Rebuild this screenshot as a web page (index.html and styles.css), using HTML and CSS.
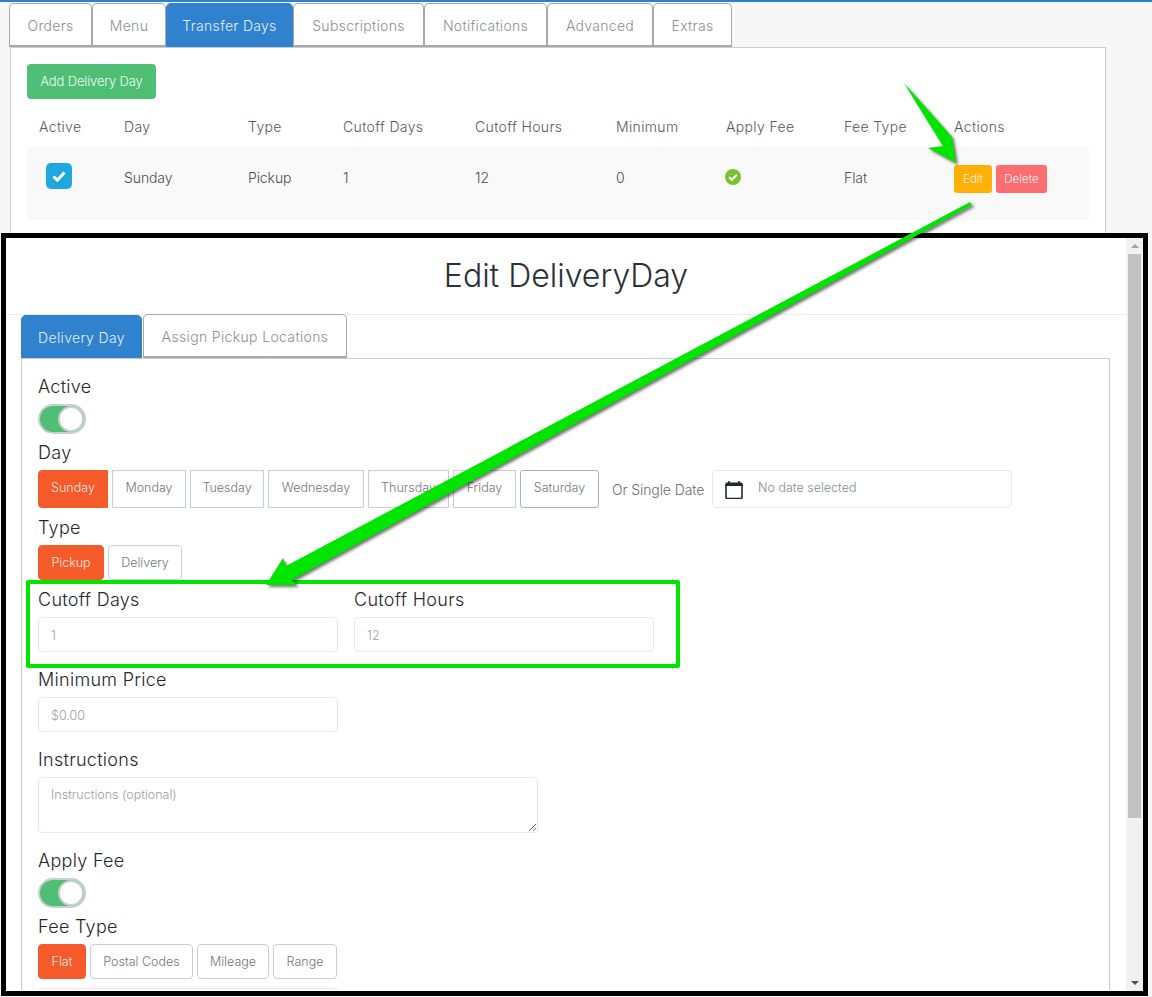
FILE: index.html
```html
<!DOCTYPE html>
<html lang="en">
<head>
<meta charset="utf-8">
<title>Transfer Days</title>
<link rel="stylesheet" href="styles.css">
</head>
<body>
<main class="page">
  <nav class="tabs page-tabs">
    <a class="tab">Orders</a><a class="tab">Menu</a><a class="tab active">Transfer Days</a><a class="tab">Subscriptions</a><a class="tab">Notifications</a><a class="tab">Advanced</a><a class="tab">Extras</a>
  </nav>
  <section class="panel">
    <button class="add-btn">Add Delivery Day</button>
    <div class="grid-row head-row">
      <span>Active</span><span>Day</span><span>Type</span><span>Cutoff Days</span><span>Cutoff Hours</span><span>Minimum</span><span>Apply Fee</span><span>Fee Type</span><span>Actions</span>
    </div>
    <div class="grid-row data-row">
      <span class="check-cell"><svg class="checkbox" viewBox="0 0 26 26"><rect width="26" height="26" rx="5" fill="#1fa8dd"/><path d="M7.5 13.5l3.8 3.6 7.2-7.6" fill="none" stroke="#fff" stroke-width="3"/></svg></span>
      <span>Sunday</span><span>Pickup</span><span>1</span><span>12</span><span>0</span>
      <span><svg class="ok" viewBox="0 0 16 16"><circle cx="8" cy="8" r="8" fill="#79c131"/><path d="M4.2 8.3l2.6 2.5 5-5.1" fill="none" stroke="#fff" stroke-width="2"/></svg></span>
      <span>Flat</span>
      <span class="actions"><button class="mini edit">Edit</button><button class="mini delete">Delete</button></span>
    </div>
  </section>
</main>

<section class="modal">
  <div class="modal-body">
    <header class="modal-head"><h1>Edit DeliveryDay</h1></header>
    <nav class="tabs modal-tabs">
      <a class="tab active">Delivery Day</a><a class="tab">Assign Pickup Locations</a>
    </nav>
    <div class="form-panel">
      <label class="lbl">Active</label>
      <div class="toggle"><i></i></div>
      <label class="lbl after-toggle">Day</label>
      <div class="day-line">
        <div class="seg days">
          <button class="opt on">Sunday</button><button class="opt">Monday</button><button class="opt">Tuesday</button><button class="opt">Wednesday</button><button class="opt">Thursday</button><button class="opt">Friday</button><button class="opt dark">Saturday</button>
        </div>
        <span class="or">Or Single Date</span>
        <div class="date-box">
          <svg class="cal" viewBox="0 0 18 18"><path d="M1 4h16v12.5a1 1 0 0 1-1 1H2a1 1 0 0 1-1-1z" fill="#fff" stroke="#23282d" stroke-width="1.6"/><path d="M.5 2.5a1 1 0 0 1 1-1h15a1 1 0 0 1 1 1V5H.5z" fill="#23282d"/><path d="M4 0v2M14 0v2" stroke="#23282d" stroke-width="1.6"/></svg>
          <span>No date selected</span>
        </div>
      </div>
      <label class="lbl after-seg">Type</label>
      <div class="seg types"><button class="opt on">Pickup</button><button class="opt">Delivery</button></div>
      <div class="two-col after-seg">
        <div><label class="lbl">Cutoff Days</label><input class="inp" value="1"></div>
        <div><label class="lbl">Cutoff Hours</label><input class="inp" value="12"></div>
      </div>
      <label class="lbl after-input">Minimum Price</label>
      <input class="inp" placeholder="$0.00">
      <label class="lbl after-input">Instructions</label>
      <textarea class="inp area" placeholder="Instructions (optional)"></textarea>
      <label class="lbl after-input">Apply Fee</label>
      <div class="toggle"><i></i></div>
      <label class="lbl after-toggle">Fee Type</label>
      <div class="seg fees"><button class="opt on">Flat</button><button class="opt">Postal Codes</button><button class="opt">Mileage</button><button class="opt">Range</button></div>
      <input class="inp last">
    </div>
  </div>
  <div class="scrollbar">
    <span class="arrow-up"></span>
    <div class="track"><div class="thumb"></div></div>
    <span class="arrow-down"></span>
  </div>
</section>

<div class="highlight"></div>
<svg class="arrows" viewBox="0 0 1152 997">
  <g class="arrow-shape">
    <polygon points="904,83 952,137 956,163 928,148 943,146"/>
    <polygon points="970,202 972,205 292,580 297,585 266,585 283,558 286,566"/>
  </g>
</svg>
</body>
</html>
```
FILE: styles.css
```css
* { box-sizing: border-box; }
html, body { margin: 0; height: 100%; }
body {
  width: 1152px;
  height: 997px;
  overflow: hidden;
  position: relative;
  background: #f7f7f7;
  border-top: 2px solid #2f80d0;
  font-family: Inter, "Liberation Sans", sans-serif;
  font-weight: 300;
  color: #454b52;
}
button, input, textarea { font: inherit; }

.page { padding: 1px 0 0 9px; }

.tabs { display: grid; }
.page-tabs { grid-template-columns: 83px 74px 127px 131px 123px 106px 79px; width: max-content; height: 44px; }
.tab {
  display: flex;
  align-items: center;
  justify-content: center;
  padding-top: 2px;
  background: #fff;
  color: #8b8f93;
  font-size: 14px;
  letter-spacing: .3px;
  border: 1px solid #a6a8aa;
  border-bottom-width: 2px;
  border-radius: 5px 5px 0 0;
}
.tab.active { background: #3082ce; border-color: #3082ce; color: #e4eef8; }

.panel {
  width: 1096px;
  height: 300px;
  margin-left: 1px;
  padding: 16px 16px 0;
  background: #fff;
  border: 1px solid #c9ccd2;
}
.add-btn {
  display: block;
  width: 129px;
  height: 35px;
  padding: 0 0 2px;
  border: 0;
  border-radius: 4px;
  background: #4fbf76;
  color: #eefaf2;
  font-size: 13px;
  letter-spacing: -.15px;
}
.grid-row {
  display: grid;
  grid-template-columns: 85px 124px 95px 132px 141px 110px 118px 110px 147px;
  width: 1062px;
  font-size: 14px;
}
.grid-row > span { padding-left: 12px; }
.head-row { height: 48px; align-items: end; padding-bottom: 12px; color: #555a60; letter-spacing: .35px; }
.data-row { height: 73px; padding-top: 15px; background: #f9f9f9; color: #4a4f55; letter-spacing: -.1px; }
.data-row > span { height: 30px; display: flex; align-items: center; }
.checkbox { display: block; width: 26px; height: 26px; margin-left: 7px; margin-top: -2px; }
.ok { display: block; width: 16px; height: 16px; margin-left: -1px; }
.actions { gap: 4px; }
.mini {
  height: 28px;
  margin-top: 4px;
  padding: 0;
  border: 0;
  border-radius: 3px;
  color: #fff3d9;
  font-size: 11.5px;
}
.edit { width: 38px; background: #ffb007; }
.delete { width: 51px; background: #fb6f72; color: #ffe9e9; }

.modal {
  position: absolute;
  left: 1px;
  top: 231px;
  width: 1147px;
  height: 763px;
  display: flex;
  overflow: hidden;
  background: #fff;
  border: 5px solid #000;
}
.modal-body { flex: 1; min-width: 0; overflow: hidden; }
.modal-head {
  height: 77px;
  padding-bottom: 2px;
  display: flex;
  align-items: center;
  justify-content: center;
  border-bottom: 1px solid #e9ecef;
}
.modal-head h1 {
  margin: 0;
  font-size: 32px;
  font-weight: 300;
  color: #2b3036;
  letter-spacing: 0;
}
.modal-tabs { grid-template-columns: 121px 204px; gap: 1px; width: max-content; height: 43px; margin-left: 15px; }
.modal-tabs .tab { letter-spacing: .35px; }
.modal-tabs .tab:last-child { height: 44px; margin-top: -1px; }
.form-panel {
  width: 1089px;
  height: 700px;
  margin-left: 15px;
  padding: 16px 16px 0;
  border: 1px solid #c9ccd2;
}
.lbl {
  display: block;
  height: 22px;
  margin-bottom: 7px;
  font-size: 18px;
  line-height: 24px;
  font-weight: 300;
  letter-spacing: .3px;
  color: #23282d;
}
.toggle {
  position: relative;
  width: 48px;
  height: 30px;
  border: 2px solid #c7cfd0;
  border-radius: 15px;
  background: #4fbf76;
}
.toggle i {
  position: absolute;
  right: 0;
  top: 0;
  width: 26px;
  height: 26px;
  border: 2px solid #c7cfd0;
  border-radius: 50%;
  background: #fff;
}
.after-toggle { margin-top: 7px; }
.after-seg { margin-top: 8px; }
.after-input { margin-top: 16px; }

.seg { display: grid; gap: 4px; width: max-content; }
.days { grid-template-columns: 70px 74px 74px 96px 81px 63px 79px; height: 38px; }
.types { grid-template-columns: 66px 74px; height: 35px; }
.fees { grid-template-columns: 48px 103px 72px 64px; height: 35px; }
.opt {
  padding: 0;
  background: #fff;
  border: 1px solid #c9ced6;
  color: #72777d;
  font-size: 12.5px;
}
.days .opt { border-radius: 0; padding-bottom: 3px; }
.opt:first-child { border-radius: 4px 0 0 4px; }
.opt:last-child { border-radius: 0 4px 4px 0; }
.types .opt, .fees .opt { border-radius: 4px; }
.days .dark { border-color: #a9b0b8; border-radius: 3px; }
.opt.on { background: #f55a2a; border-color: #f55a2a; color: #ffe9e0; }

.day-line { display: flex; align-items: center; height: 38px; }
.or { margin-left: 13px; width: 100px; font-size: 14px; letter-spacing: -.1px; color: #6a6f75; white-space: nowrap; }
.date-box {
  display: flex;
  align-items: center;
  width: 300px;
  height: 38px;
  padding-left: 12px;
  border: 1px solid #e6e8ea;
  border-radius: 4px;
  font-size: 12.5px;
  color: #888c92;
}
.cal { width: 18px; height: 18px; margin-top: 2px; flex: none; }
.date-box span { margin: 0 0 3px 15px; }

.two-col { display: flex; gap: 16px; }
.inp {
  display: block;
  width: 300px;
  height: 35px;
  padding: 1px 12px 0;
  border: 1px solid #e6e8ea;
  border-radius: 4px;
  background: #fff;
  color: #9a9ea3;
  font-size: 12.5px;
  outline: 0;
}
.inp::placeholder { color: #9a9ea3; opacity: 1; }
.area { width: 500px; height: 56px; padding-top: 9px; }
.last { margin-top: 9px; }

.scrollbar {
  flex: none;
  width: 17px;
  background: #f1f1f1;
  display: flex;
  flex-direction: column;
  align-items: center;
}
.arrow-up, .arrow-down { flex: none; width: 0; height: 0; margin: 6px 0; border: solid transparent; border-width: 0 4px; }
.arrow-up { border-bottom: 4px solid #a3a3a3; }
.arrow-down { border-top: 4px solid #505050; }
.track { flex: 1; width: 13px; }
.thumb { width: 13px; height: 564px; background: #c1c1c1; }

.highlight {
  position: absolute;
  left: 26px;
  top: 578px;
  width: 654px;
  height: 88px;
  border: 4px solid #00e500;
  border-radius: 2px;
}
.arrows { position: absolute; left: 0; top: -2px; width: 1152px; height: 997px; pointer-events: none; }
.arrow-shape { fill: #00e500; filter: drop-shadow(2px 2px 1.5px rgba(0,0,0,.55)); }
```
